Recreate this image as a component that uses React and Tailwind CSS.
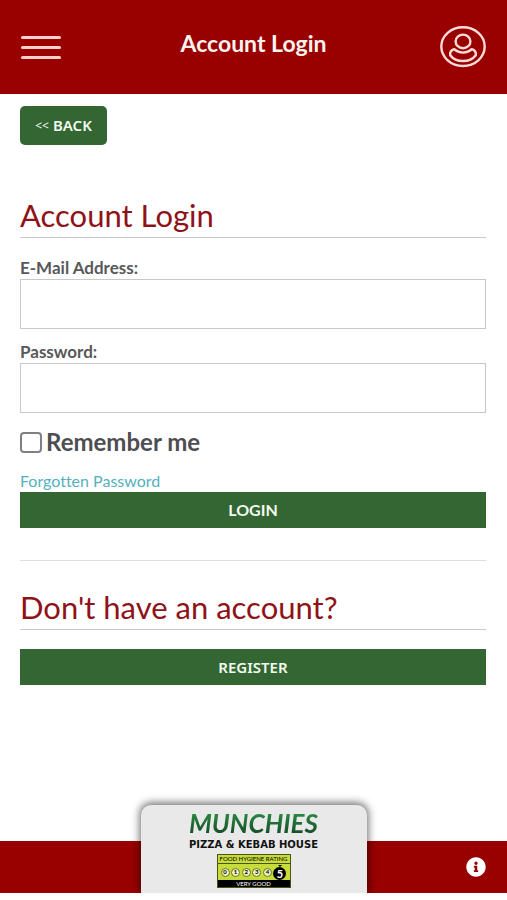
import { useState } from 'react'
import { FaInfoCircle } from 'react-icons/fa'

const ratings = [0, 1, 2, 3, 4]

const UserIcon = () => (
  <svg viewBox="0 0 46 42" className="h-[42px] w-[46px]" fill="none" stroke="#ffdcd8" strokeWidth="2.4">
    <ellipse cx="23" cy="20.6" rx="21.7" ry="19.4" />
    <ellipse cx="23" cy="15.4" rx="7.4" ry="6.8" />
    <path
      strokeLinejoin="round"
      d="M14.3 23.2C11.6 24 9.8 26.4 10.2 29.2C13.2 33.2 17.7 35 23 35S32.8 33.2 35.8 29.2C36.2 26.4 34.4 24 31.7 23.2C29.4 25.4 26.4 26.6 23 26.6S16.6 25.4 14.3 23.2Z"
    />
  </svg>
)

const SectionTitle = ({ children }) => (
  <h2 className="border-b border-[#c8c8c8] pb-1 text-[31px] leading-9 text-[#8f1218]">{children}</h2>
)

const Field = ({ id, label, type }) => (
  <div>
    <label htmlFor={id} className="block text-[17px] leading-[22px] font-bold text-[#58585b]">{label}</label>
    <input id={id} name={id} type={type} className="block h-[50px] w-full border border-[#c8c8c8] bg-white px-3 text-base outline-none" />
  </div>
)

const HygieneRating = () => (
  <div className="w-[74px] border border-[#4c5410] bg-[#c5dc3c] text-black">
    <div className="flex h-2 items-center justify-center text-[6px] leading-[8px] whitespace-nowrap">FOOD HYGIENE RATING</div>
    <div className="flex h-[17px] items-center justify-between border-t border-[#4c5410] px-[3px]">
      {ratings.map((n) => (
        <span key={n} className="flex size-[9px] items-center justify-center rounded-full border border-[#6b7320] bg-[#eef3c0] text-[6px] leading-none font-bold">{n}</span>
      ))}
      <span className="flex flex-col items-center">
        <svg viewBox="0 0 4 2" className="h-[2px] w-1"><path d="M0 0H4L2 2Z" /></svg>
        <span className="flex size-[13px] items-center justify-center rounded-full bg-black text-[11px] leading-none font-bold text-white">5</span>
      </span>
    </div>
    <div className="flex h-[7px] items-center justify-center bg-black text-[6px] leading-[7px] text-white">VERY GOOD</div>
  </div>
)

export default function App() {
  const [remember, setRemember] = useState(false)

  return (
    <div className="flex min-h-screen flex-col bg-white font-['Lato',sans-serif] [font-variant-ligatures:none]">
      <header className="grid h-[94px] grid-cols-[1fr_auto_1fr] items-center bg-[#990000] px-[21px]">
        <button type="button" aria-label="Menu" className="flex w-10 flex-col gap-[7px]">
          <span className="h-[3px] w-full rounded-full bg-[#ffcfcb]" />
          <span className="h-[3px] w-full rounded-full bg-[#ffcfcb]" />
          <span className="h-[3px] w-full rounded-full bg-[#ffcfcb]" />
        </button>
        <h1 className="pb-2 text-[23px] leading-7 font-bold text-[#fff3f0]">Account Login</h1>
        <a href="#account" aria-label="Account" className="justify-self-end">
          <UserIcon />
        </a>
      </header>

      <main className="flex-1 pt-3 pr-[21px] pl-5">
        <a href="#back" className="flex h-[39px] w-[87px] items-center justify-center gap-1 rounded-[5px] bg-[#336633] font-['Noto_Sans',sans-serif] text-[15px] font-semibold text-[#f2fbef]">
          <span className="text-xs font-normal">&lt;&lt;</span>
          BACK
        </a>

        <form className="mt-[52px]" onSubmit={(e) => e.preventDefault()}>
          <SectionTitle>Account Login</SectionTitle>
          <div className="mt-[19px] flex flex-col gap-3">
            <Field id="email" label="E-Mail Address:" type="email" />
            <Field id="password" label="Password:" type="password" />
          </div>
          <label className="mt-[13px] flex items-center gap-1 text-2xl font-bold text-[#4e4e52]">
            <input
              type="checkbox"
              checked={remember}
              onChange={(e) => setRemember(e.target.checked)}
              className="h-[21px] w-[22px] appearance-none rounded-[4px] border-2 border-[#808083] bg-white checked:bg-[#336633]"
            />
            Remember me
          </label>
          <a href="#forgotten" className="mt-3 block text-base leading-[22px] text-[#55b0bd]">Forgotten Password</a>
          <button type="submit" className="block h-9 w-full bg-[#336633] text-base font-bold text-[#f2fbef]">LOGIN</button>
        </form>

        <hr className="mt-8 border-[#dedede]" />

        <section className="mt-7">
          <SectionTitle>Don't have an account?</SectionTitle>
          <button type="button" className="mt-[19px] block h-9 w-full bg-[#336633] font-['Noto_Sans',sans-serif] text-[15px] font-semibold text-[#f2fbef]">REGISTER</button>
        </section>
      </main>

      <footer className="relative mb-[7px] flex h-[52px] items-center justify-end bg-[#990000] px-[21px]">
        <div className="absolute inset-x-0 bottom-0 mx-auto h-[88px] w-[226px]">
          <div className="flex h-full flex-col items-center rounded-t-[10px] bg-[#e9e9e9] pt-[3px] shadow-[0_-1px_8px_1px_rgba(0,0,0,0.6)] [clip-path:inset(-20px_-20px_0_-20px)]">
            <div className="bg-linear-to-b from-[#2f9a48] to-[#123f22] bg-clip-text px-1 text-[26px] leading-[31px] font-bold italic text-transparent">MUNCHIES</div>
            <div className="font-['DejaVu_Sans',sans-serif] text-[10px] leading-[11px] font-bold text-[#111111]">PIZZA &amp; KEBAB HOUSE</div>
            <div className="mt-1">
              <HygieneRating />
            </div>
          </div>
        </div>
        <button type="button" aria-label="Information">
          <FaInfoCircle className="size-5 text-white" />
        </button>
      </footer>
    </div>
  )
}
